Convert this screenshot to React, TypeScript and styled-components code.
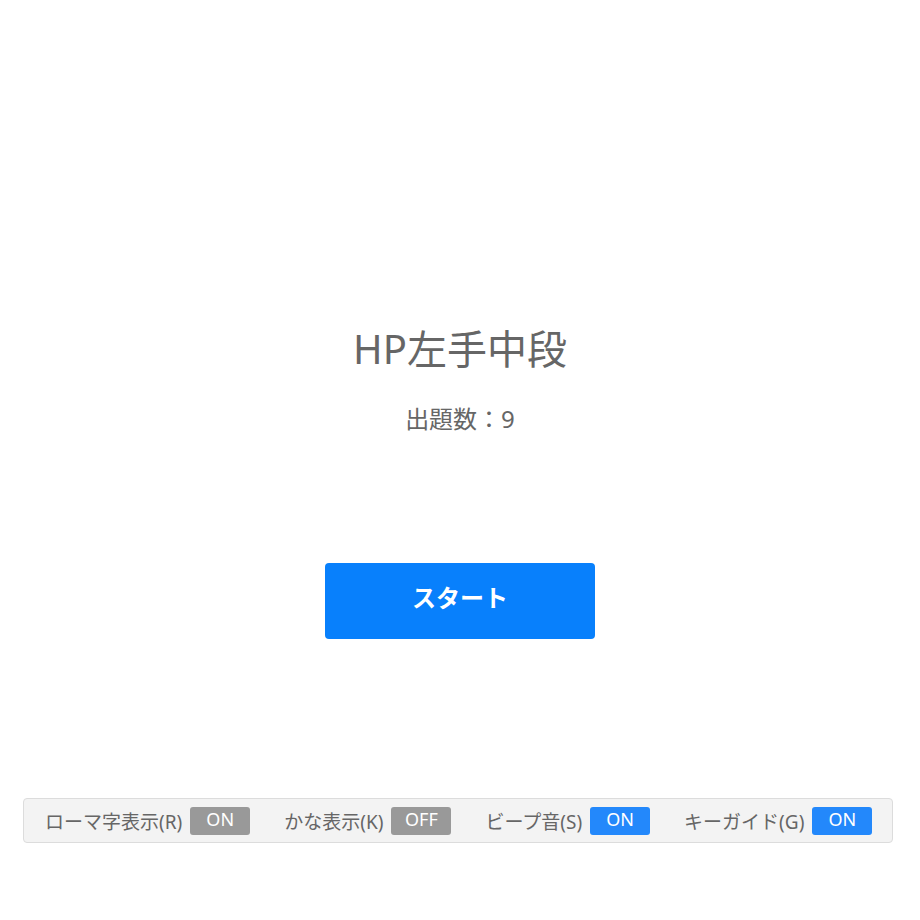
import styled, { createGlobalStyle } from 'styled-components';

const GlobalStyle = createGlobalStyle`
  html, body {
    margin: 0;
    padding: 0;
    background: #fff;
  }
  body {
    font-family: 'Noto Sans', 'Noto Sans CJK JP', sans-serif;
    color: #666;
  }
`;

const Page = styled.div`
  width: 920px;
  height: 920px;
  display: flex;
  flex-direction: column;
  align-items: center;
  overflow: hidden;
`;

const Title = styled.h1`
  margin: 326px 0 0;
  font-size: 40px;
  line-height: 46px;
  font-weight: 400;
  color: #666;
`;

const QuestionCount = styled.div`
  margin-top: 32px;
  font-size: 24px;
  line-height: 30px;
  color: #666;
`;

const StartButton = styled.button`
  margin-top: 129px;
  width: 270px;
  height: 76px;
  padding: 0 0 10px;
  border: none;
  border-radius: 4px;
  background: #0880fc;
  color: #fff;
  font-family: 'Noto Sans', 'Noto Sans CJK JP', sans-serif;
  font-size: 24px;
  font-weight: 700;
  cursor: pointer;
`;

const OptionBar = styled.div`
  margin-top: 159px;
  align-self: flex-start;
  margin-left: 23px;
  width: 870px;
  height: 45px;
  box-sizing: border-box;
  background: #f3f3f3;
  border: 1px solid #dcdcdc;
  border-radius: 4px;
  display: flex;
  align-items: center;
  padding: 0 20px 0 21px;
  gap: 34px;
`;

const Option = styled.div`
  display: flex;
  align-items: center;
  gap: 8px;
`;

const OptionLabel = styled.span`
  font-size: 19px;
  color: #666;
  white-space: nowrap;
`;

const Badge = styled.span<{ $primary: boolean }>`
  width: 60px;
  height: 28px;
  padding-bottom: 3px;
  box-sizing: border-box;
  border-radius: 3px;
  display: flex;
  align-items: center;
  justify-content: center;
  color: #fff;
  font-size: 18px;
  background: ${(p) => (p.$primary ? '#2388fb' : '#999')};
`;

const options = [
  { label: 'ローマ字表示(R)', on: true, primary: false },
  { label: 'かな表示(K)', on: false, primary: false },
  { label: 'ビープ音(S)', on: true, primary: true },
  { label: 'キーガイド(G)', on: true, primary: true },
];

const App = () => {
  return (
    <Page>
      <GlobalStyle />
      <Title>HP左手中段</Title>
      <QuestionCount>出題数：9</QuestionCount>
      <StartButton>スタート</StartButton>
      <OptionBar>
        {options.map((o) => (
          <Option key={o.label}>
            <OptionLabel>{o.label}</OptionLabel>
            <Badge $primary={o.primary}>{o.on ? 'ON' : 'OFF'}</Badge>
          </Option>
        ))}
      </OptionBar>
    </Page>
  );
};

export default App;
